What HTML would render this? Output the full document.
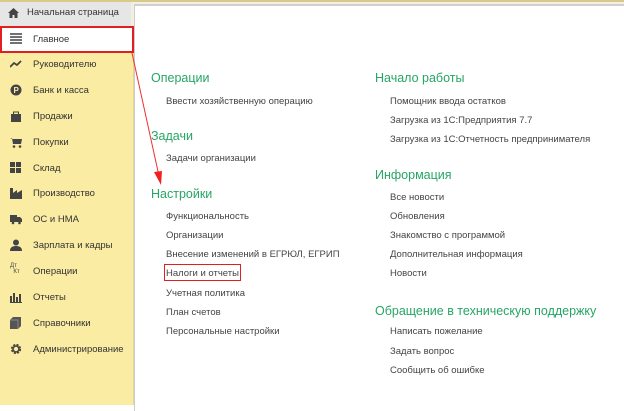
<!DOCTYPE html>
<html><head><meta charset="utf-8"><style>
*{margin:0;padding:0;box-sizing:border-box}
body{width:624px;height:411px;background:#fff;position:relative;overflow:hidden;font-family:"Liberation Sans",Arial,sans-serif}
.top{position:absolute;left:0;top:0;width:624px;height:26px;background:#f3efe0;border-top:2px solid #d9c98a}
.tab{position:absolute;left:0;top:2px;width:131px;height:24px;background:#e6e6e6;font-size:9.5px;color:#333;line-height:22px;padding-left:27px}
.side{position:absolute;left:0;top:26px;width:135px;height:379px;background:#fbeca3;border-right:2px solid #e2d69a}
.panel{position:absolute;left:134px;top:4px;width:490px;height:407px;background:#fff;border-left:1px solid #ccc;border-top:2px solid #cfcfcf}
.it{position:absolute;left:33px;font-size:9.5px;color:#333;margin-top:1px}
.ic{position:absolute;left:10px;width:12px;height:12px}
.h{position:absolute;font-size:12.5px;color:#27a565;margin-top:2px}
.l{position:absolute;font-size:9.5px;color:#444;margin-top:2px}
</style></head><body>
<div class="top"></div>
<div class="tab"><svg style="position:absolute;left:8px;top:6px" width="11" height="10" viewBox="0 0 11 10"><path d="M5.5 0L0 5h1.5v5h3V7h2v3h3V5H11z" fill="#444"/></svg>Начальная страница</div>
<div class="side"></div>
<div class="panel"></div>
<div style="position:absolute;left:0;top:26px;width:134px;height:27px;background:#fff;border:2px solid #e02020"></div>
<svg class="ic" style="top:33px" viewBox="0 0 12 12"><path d="M0 1h12M0 4h12M0 7h12M0 10h12" stroke="#444" stroke-width="1.6"/></svg>
<div class="it" style="top:33px">Главное</div>
<svg class="ic" style="top:58px" viewBox="0 0 12 12"><path d="M0 9l4-4 3 2 4-4" stroke="#444" stroke-width="1.8" fill="none"/></svg>
<div class="it" style="top:58px">Руководителю</div>
<svg class="ic" style="top:84px" viewBox="0 0 12 12"><circle cx="6" cy="6" r="5.5" fill="#444"/><text x="3.5" y="9" font-size="8" fill="#fbeca3" font-weight="bold">P</text></svg>
<div class="it" style="top:84px">Банк и касса</div>
<svg class="ic" style="top:110px" viewBox="0 0 12 12"><rect x="1" y="4" width="10" height="8" fill="#444"/><path d="M3.5 4V2h5v2" stroke="#444" fill="none"/></svg>
<div class="it" style="top:110px">Продажи</div>
<svg class="ic" style="top:136px" viewBox="0 0 12 12"><path d="M0 2h2l1 6h8l1-5H3" fill="#444"/><circle cx="4" cy="10.5" r="1.3" fill="#444"/><circle cx="10" cy="10.5" r="1.3" fill="#444"/></svg>
<div class="it" style="top:136px">Покупки</div>
<svg class="ic" style="top:162px" viewBox="0 0 12 12"><rect x="0" y="0" width="5" height="5" fill="#444"/><rect x="6" y="0" width="5" height="5" fill="#444"/><rect x="0" y="6" width="5" height="5" fill="#444"/><rect x="6" y="6" width="5" height="5" fill="#444"/></svg>
<div class="it" style="top:162px">Склад</div>
<svg class="ic" style="top:187px" viewBox="0 0 12 12"><path d="M0 12V1h3v5l4-3v3l5-3v9z" fill="#444"/></svg>
<div class="it" style="top:187px">Производство</div>
<svg class="ic" style="top:213px" viewBox="0 0 12 12"><rect x="0" y="2" width="7" height="7" fill="#444"/><path d="M7 4h3l2 2v3H7z" fill="#444"/><circle cx="3" cy="10" r="1.3" fill="#444"/><circle cx="9.5" cy="10" r="1.3" fill="#444"/></svg>
<div class="it" style="top:213px">ОС и НМА</div>
<svg class="ic" style="top:239px" viewBox="0 0 12 12"><circle cx="6" cy="3.5" r="3" fill="#444"/><path d="M0 12c0-4 3-5 6-5s6 1 6 5z" fill="#444"/></svg>
<div class="it" style="top:239px">Зарплата и кадры</div>
<div style="position:absolute;left:10px;top:263px;font-size:6px;color:#444;line-height:6px">Дт<br>&nbsp;&nbsp;Кт</div>
<div class="it" style="top:265px">Операции</div>
<svg class="ic" style="top:291px" viewBox="0 0 12 12"><path d="M1 11V5M4 11V2M7 11V6M10 11V3" stroke="#444" stroke-width="2"/><path d="M0 11.5h12" stroke="#444"/></svg>
<div class="it" style="top:291px">Отчеты</div>
<svg class="ic" style="top:317px" viewBox="0 0 12 12"><path d="M0 3l3-3h8v9l-3 3H0z" fill="#555"/><path d="M0 3h8v9" stroke="#888" fill="none"/></svg>
<div class="it" style="top:317px">Справочники</div>
<svg class="ic" style="top:343px" viewBox="0 0 12 12"><circle cx="6" cy="6" r="4" fill="none" stroke="#444" stroke-width="2.2" stroke-dasharray="2 1.2"/><circle cx="6" cy="6" r="3" fill="none" stroke="#444" stroke-width="1.6"/></svg>
<div class="it" style="top:343px">Администрирование</div>

<div class="h" style="left:151px;top:69px">Операции</div>
<div class="l" style="left:166px;top:94px">Ввести хозяйственную операцию</div>
<div class="h" style="left:151px;top:127px">Задачи</div>
<div class="l" style="left:166px;top:151px">Задачи организации</div>
<div class="h" style="left:151px;top:185px">Настройки</div>
<div class="l" style="left:166px;top:209px">Функциональность</div>
<div class="l" style="left:166px;top:228px">Организации</div>
<div class="l" style="left:166px;top:247px">Внесение изменений в ЕГРЮЛ, ЕГРИП</div>
<div style="position:absolute;left:164px;top:264px;width:77px;height:17px;border:1.5px solid #e02020"></div>
<div class="l" style="left:166px;top:266px">Налоги и отчеты</div>
<div class="l" style="left:166px;top:286px">Учетная политика</div>
<div class="l" style="left:166px;top:305px">План счетов</div>
<div class="l" style="left:166px;top:324px">Персональные настройки</div>

<div class="h" style="left:375px;top:69px">Начало работы</div>
<div class="l" style="left:390px;top:94px">Помощник ввода остатков</div>
<div class="l" style="left:390px;top:113px">Загрузка из 1С:Предприятия 7.7</div>
<div class="l" style="left:390px;top:132px">Загрузка из 1С:Отчетность предпринимателя</div>
<div class="h" style="left:375px;top:166px">Информация</div>
<div class="l" style="left:390px;top:190px">Все новости</div>
<div class="l" style="left:390px;top:209px">Обновления</div>
<div class="l" style="left:390px;top:228px">Знакомство с программой</div>
<div class="l" style="left:390px;top:247px">Дополнительная информация</div>
<div class="l" style="left:390px;top:266px">Новости</div>
<div class="h" style="left:375px;top:302px">Обращение в техническую поддержку</div>
<div class="l" style="left:390px;top:324px">Написать пожелание</div>
<div class="l" style="left:390px;top:344px">Задать вопрос</div>
<div class="l" style="left:390px;top:363px">Сообщить об ошибке</div>

<svg style="position:absolute;left:0;top:0" width="624" height="411"><path d="M132 53L159 176" stroke="#f03030" stroke-width="1"/><path d="M154 172l7 13 1-14z" fill="#f02020"/></svg>
</body></html>
